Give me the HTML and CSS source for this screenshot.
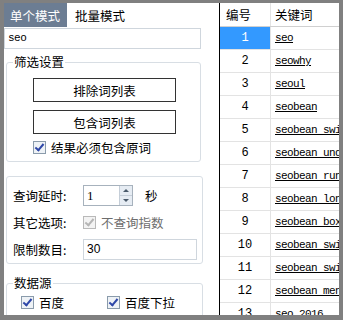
FILE: index.html
```html
<!DOCTYPE html>
<html lang="zh-CN">
<head>
    <meta charset="UTF-8">
    <title>关键词挖掘</title>
    <link rel="stylesheet" href="styles.css">
</head>
<body>
    <div class="window">
        <div class="side">
            <div class="tabs">
                <span class="tab active">单个模式</span>
                <span class="tab">批量模式</span>
            </div>
            <div class="keyword-box">seo</div>

            <div class="group filter">
                <span class="legend">筛选设置</span>
                <button class="btn">排除词列表</button>
                <button class="btn">包含词列表</button>
                <label class="check"><span class="box on"></span>结果必须包含原词</label>
            </div>

            <div class="group options">
                <div class="row">
                    <span class="label">查询延时:</span>
                    <div class="spin">
                        <span class="spin-val">1</span>
                        <span class="spin-btns"><i class="up"></i><i class="down"></i></span>
                    </div>
                    <span class="unit">秒</span>
                </div>
                <div class="row">
                    <span class="label">其它选项:</span>
                    <label class="check disabled"><span class="box on"></span>不查询指数</label>
                </div>
                <div class="row">
                    <span class="label">限制数目:</span>
                    <div class="field">30</div>
                </div>
            </div>

            <div class="group source">
                <span class="legend">数据源</span>
                <div class="source-grid">
                    <label class="check"><span class="box on"></span>百度</label>
                    <label class="check"><span class="box on"></span>百度下拉</label>
                    <label class="check"><span class="box on"></span>百度相关</label>
                    <label class="check"><span class="box on"></span>百度知道</label>
                </div>
            </div>
        </div>

        <div class="grid">
            <div class="grid-row head">
                <span class="num">编号</span>
                <span class="kw">关键词</span>
            </div>
            <div class="grid-row selected"><span class="num">1</span><span class="kw">seo</span></div>
            <div class="grid-row"><span class="num">2</span><span class="kw">seowhy</span></div>
            <div class="grid-row"><span class="num">3</span><span class="kw">seoul</span></div>
            <div class="grid-row"><span class="num">4</span><span class="kw">seobean</span></div>
            <div class="grid-row"><span class="num">5</span><span class="kw">seobean switch</span></div>
            <div class="grid-row"><span class="num">6</span><span class="kw">seobean underwear</span></div>
            <div class="grid-row"><span class="num">7</span><span class="kw">seobean running</span></div>
            <div class="grid-row"><span class="num">8</span><span class="kw">seobean long</span></div>
            <div class="grid-row"><span class="num">9</span><span class="kw">seobean boxer</span></div>
            <div class="grid-row"><span class="num">10</span><span class="kw">seobean swim</span></div>
            <div class="grid-row"><span class="num">11</span><span class="kw">seobean swimwear</span></div>
            <div class="grid-row"><span class="num">12</span><span class="kw">seobean mens</span></div>
            <div class="grid-row"><span class="num">13</span><span class="kw">seo 2016</span></div>
        </div>
    </div>
</body>
</html>
```

FILE: styles.css
```css
* {
    margin: 0;
    padding: 0;
    box-sizing: border-box;
}

body {
    background-color: #808080;
    font-family: 'Noto Sans CJK SC', sans-serif;
    font-size: 12px;
    color: #000;
}

.window {
    width: 343px;
    height: 320px;
    border: solid #808080;
    border-width: 3px 4px 5px 4px;
    background-color: #ffffff;
    display: flex;
    overflow: hidden;
}

/* left settings panel */

.side {
    width: 216px;
    flex-shrink: 0;
    border-right: 1px solid #000;
    overflow: hidden;
}

.tabs {
    display: flex;
    height: 24px;
    align-items: stretch;
}

.tab {
    display: flex;
    align-items: center;
    padding: 0 6px;
    font-size: 12.5px;
    margin-right: 2px;
}

.tab.active {
    background-color: #6c7d93;
    color: #fff;
    width: 63px;
}

.keyword-box {
    width: 197px;
    height: 21px;
    margin-top: 1px;
    border: 1px solid #cfd6dd;
    font-family: 'Liberation Mono', 'DejaVu Sans Mono', monospace;
    font-size: 11px;
    line-height: 13px;
    padding: 3px 3px;
    letter-spacing: -0.5px;
}

.group {
    border: 1px solid #d8dee4;
    border-radius: 3px;
    margin-left: 2px;
    position: relative;
}

.legend {
    position: absolute;
    top: -8px;
    left: 6px;
    padding: 0 1px;
    line-height: 14px;
    font-size: 12.5px;
    background: #fff;
}

.filter {
    width: 195px;
    height: 100px;
    margin-top: 13px;
    display: flex;
    flex-direction: column;
    align-items: flex-start;
    padding: 15px 0 0 26px;
}

.btn {
    width: 143px;
    height: 24px;
    border: 1px solid #333;
    background: #fff;
    font-family: inherit;
    font-size: 12.5px;
    margin-bottom: 8px;
}

.filter .check {
    margin-top: -1px;
}

.check {
    display: flex;
    align-items: center;
    gap: 5px;
    height: 13px;
    font-size: 12.5px;
}

.box {
    width: 13px;
    height: 13px;
    flex-shrink: 0;
    border: 1px solid #8a9bab;
    background: #eef2f6;
    position: relative;
}

.box.on::after {
    content: "";
    position: absolute;
    left: 3px;
    top: 0;
    width: 3px;
    height: 7px;
    border: solid #2e47a8;
    border-width: 0 2px 2px 0;
    transform: rotate(40deg);
}

.check.disabled {
    color: #6d6d6d;
}

.check.disabled .box {
    border-color: #b9b9b9;
    background: #f3f3f3;
}

.check.disabled .box.on::after {
    border-color: #b5b5b5;
}

.options {
    width: 197px;
    height: 88px;
    margin-top: 14px;
    padding: 8px 0 0 6px;
    display: flex;
    flex-direction: column;
    gap: 6px;
}

.row {
    display: flex;
    align-items: center;
    height: 21px;
}

.label {
    width: 70px;
    font-size: 12.5px;
}

.spin {
    width: 50px;
    height: 21px;
    border: 1px solid #a7b2bd;
    display: flex;
}

.spin-val {
    flex: 1;
    font-family: 'Liberation Serif', serif;
    font-size: 13px;
    padding: 2px 3px;
}

.spin-btns {
    width: 13px;
    display: flex;
    flex-direction: column;
    border-left: 1px solid #c5ced8;
}

.spin-btns i {
    flex: 1;
    background: #e6ecf3;
    position: relative;
}

.spin-btns i + i {
    border-top: 1px solid #c5ced8;
}

.spin-btns i::after {
    content: "";
    position: absolute;
    left: 3px;
    border: 3px solid transparent;
}

.spin-btns .up::after {
    border-bottom-color: #4a5a6b;
    top: 0;
}

.spin-btns .down::after {
    border-top-color: #4a5a6b;
    top: 3px;
}

.unit {
    margin-left: 12px;
    font-size: 12.5px;
}

.field {
    width: 114px;
    height: 21px;
    border: 1px solid #cfd6dd;
    font-family: 'Liberation Sans', sans-serif;
    padding: 2px 3px;
}

.source {
    width: 197px;
    height: 60px;
    margin-top: 19px;
    padding: 12px 0 0 14px;
}

.source-grid {
    display: grid;
    grid-template-columns: 86px 86px;
    row-gap: 6px;
}

/* result grid */

.grid {
    flex: 1;
    overflow: hidden;
}

.grid-row {
    display: flex;
    height: 23px;
    border-bottom: 1px solid #e3e3e3;
}

.grid-row.head {
    height: 24px;
    border-bottom: 1px solid #d0d0d0;
}

.num {
    width: 51px;
    flex-shrink: 0;
    display: flex;
    align-items: center;
    justify-content: center;
    border-right: 1px solid #e3e3e3;
    font-family: 'Liberation Mono', 'DejaVu Sans Mono', monospace;
    font-size: 12px;
}

.kw {
    display: flex;
    align-items: center;
    padding-left: 4px;
    white-space: nowrap;
    font-family: 'Liberation Mono', 'DejaVu Sans Mono', monospace;
    font-size: 11px;
    letter-spacing: -0.6px;
    text-decoration: underline;
}

.head .num {
    justify-content: flex-start;
    padding-left: 6px;
    font-family: 'Noto Sans CJK SC', sans-serif;
    font-size: 12.5px;
}

.head .kw {
    font-family: 'Noto Sans CJK SC', sans-serif;
    font-size: 12.5px;
    letter-spacing: 0;
    text-decoration: none;
}

.selected .num {
    background-color: #3399ff;
    color: #fff;
}
```
